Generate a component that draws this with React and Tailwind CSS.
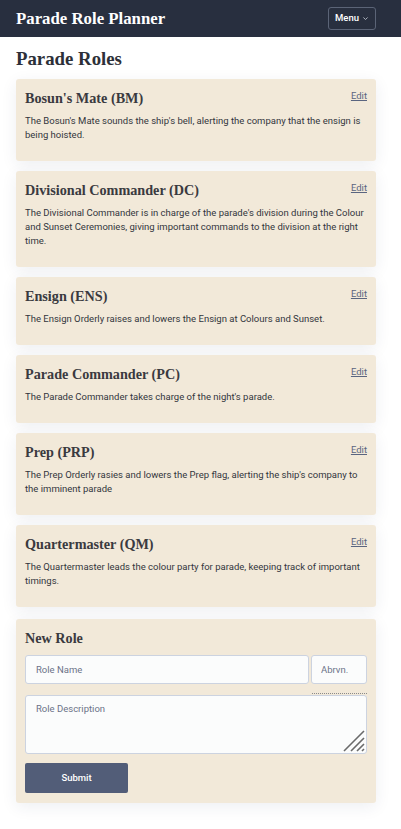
import React from 'react';

const roles = [
  {
    name: "Bosun's Mate (BM)",
    desc: "The Bosun's Mate sounds the ship's bell, alerting the company that the ensign is being hoisted.",
  },
  {
    name: 'Divisional Commander (DC)',
    desc: "The Divisional Commander is in charge of the parade's division during the Colour and Sunset Ceremonies, giving important commands to the division at the right time.",
  },
  {
    name: 'Ensign (ENS)',
    desc: 'The Ensign Orderly raises and lowers the Ensign at Colours and Sunset.',
  },
  {
    name: 'Parade Commander (PC)',
    desc: "The Parade Commander takes charge of the night's parade.",
  },
  {
    name: 'Prep (PRP)',
    desc: "The Prep Orderly rasies and lowers the Prep flag, alerting the ship's company to the imminent parade",
  },
  {
    name: 'Quartermaster (QM)',
    desc: 'The Quartermaster leads the colour party for parade, keeping track of important timings.',
  },
];

const serif = "font-['Liberation_Serif',serif]";

function RoleCard({ role }) {
  return (
    <div className="bg-[#f2e9d9] rounded-[3px] px-[9px] pt-[9px] pb-[19px] shadow-[0_4px_16px_rgba(40,50,90,0.08)]">
      <div className="flex items-start justify-between">
        <h2 className={`${serif} text-[14.2px] font-bold text-[#3a3a3f] leading-[20px]`}>{role.name}</h2>
        <a href="#" className="text-[9.5px] text-[#5a6580] underline leading-[14px] mt-[1px]">Edit</a>
      </div>
      <p className="mt-[6px] text-[9.5px] leading-[14px] text-[#33363d]">{role.desc}</p>
    </div>
  );
}

export default function App() {
  return (
    <div className="min-h-screen bg-white font-['Roboto',sans-serif]">
      <header className="h-[37px] bg-[#282f3f] flex items-center justify-between pl-4 pr-[25px]">
        <h1 className={`${serif} text-white font-bold text-[16.8px]`}>Parade Role Planner</h1>
        <button className="flex items-center gap-[3px] h-[23px] px-[6px] border border-[#5b6477] rounded-[3px] text-white text-[9.5px] font-medium">
          Menu
          <svg width="7" height="7" viewBox="0 0 10 10" fill="none" stroke="#aeb4c0" strokeWidth="1.4">
            <path d="M2 3.5l3 3 3-3" />
          </svg>
        </button>
      </header>
      <main className="pl-4 pr-[25px] pb-6">
        <h2 className={`${serif} text-[18.8px] font-bold text-[#2d3038] mt-[9px] leading-[26px]`}>Parade Roles</h2>
        <div className="mt-[7px] flex flex-col gap-[10px]">
          {roles.map((r) => (
            <RoleCard key={r.name} role={r} />
          ))}
          <div className="mt-[2px] bg-[#f2e9d9] rounded-[3px] px-[9px] pt-[9px] pb-[10px] shadow-[0_4px_16px_rgba(40,50,90,0.08)]">
            <h2 className={`${serif} text-[14.2px] font-bold text-[#3a3a3f] leading-[20px]`}>New Role</h2>
            <div className="mt-[7px] flex gap-[2px]">
              <input
                placeholder="Role Name"
                className="flex-1 min-w-0 h-[29px] bg-[#fbfcfc] border border-[#ccd3e0] rounded-[3px] px-[10px] text-[9.5px] placeholder:text-[#6b7388] outline-none"
              />
              <input
                placeholder="Abrvn."
                className="w-[56px] h-[29px] bg-[#fbfcfc] border border-[#ccd3e0] rounded-[3px] px-[9px] text-[9.5px] placeholder:text-[#6b7388] outline-none"
              />
            </div>
            <div className="flex justify-end">
              <div className="w-[55px] mt-[9px] border-t border-dotted border-[#8a8a8a]"></div>
            </div>
            <div className="relative mt-[1px]">
              <textarea
                placeholder="Role Description"
                className="block w-full h-[59px] bg-[#fbfcfc] border border-[#ccd3e0] rounded-[3px] px-[10px] py-[6px] text-[9.5px] placeholder:text-[#6b7388] outline-none resize-none"
              />
              <svg className="absolute right-[2px] bottom-[2px]" width="22" height="22" viewBox="0 0 22 22" stroke="#6a6a6a" strokeWidth="1.6">
                <path d="M1 21L21 1M8 21L21 8M14 21L21 14M19 21L21 19" />
              </svg>
            </div>
            <button className="mt-[9px] w-[103px] h-[30px] bg-[#525d78] rounded-[2px] text-white text-[9.5px] font-medium">
              Submit
            </button>
          </div>
        </div>
      </main>
    </div>
  );
}
